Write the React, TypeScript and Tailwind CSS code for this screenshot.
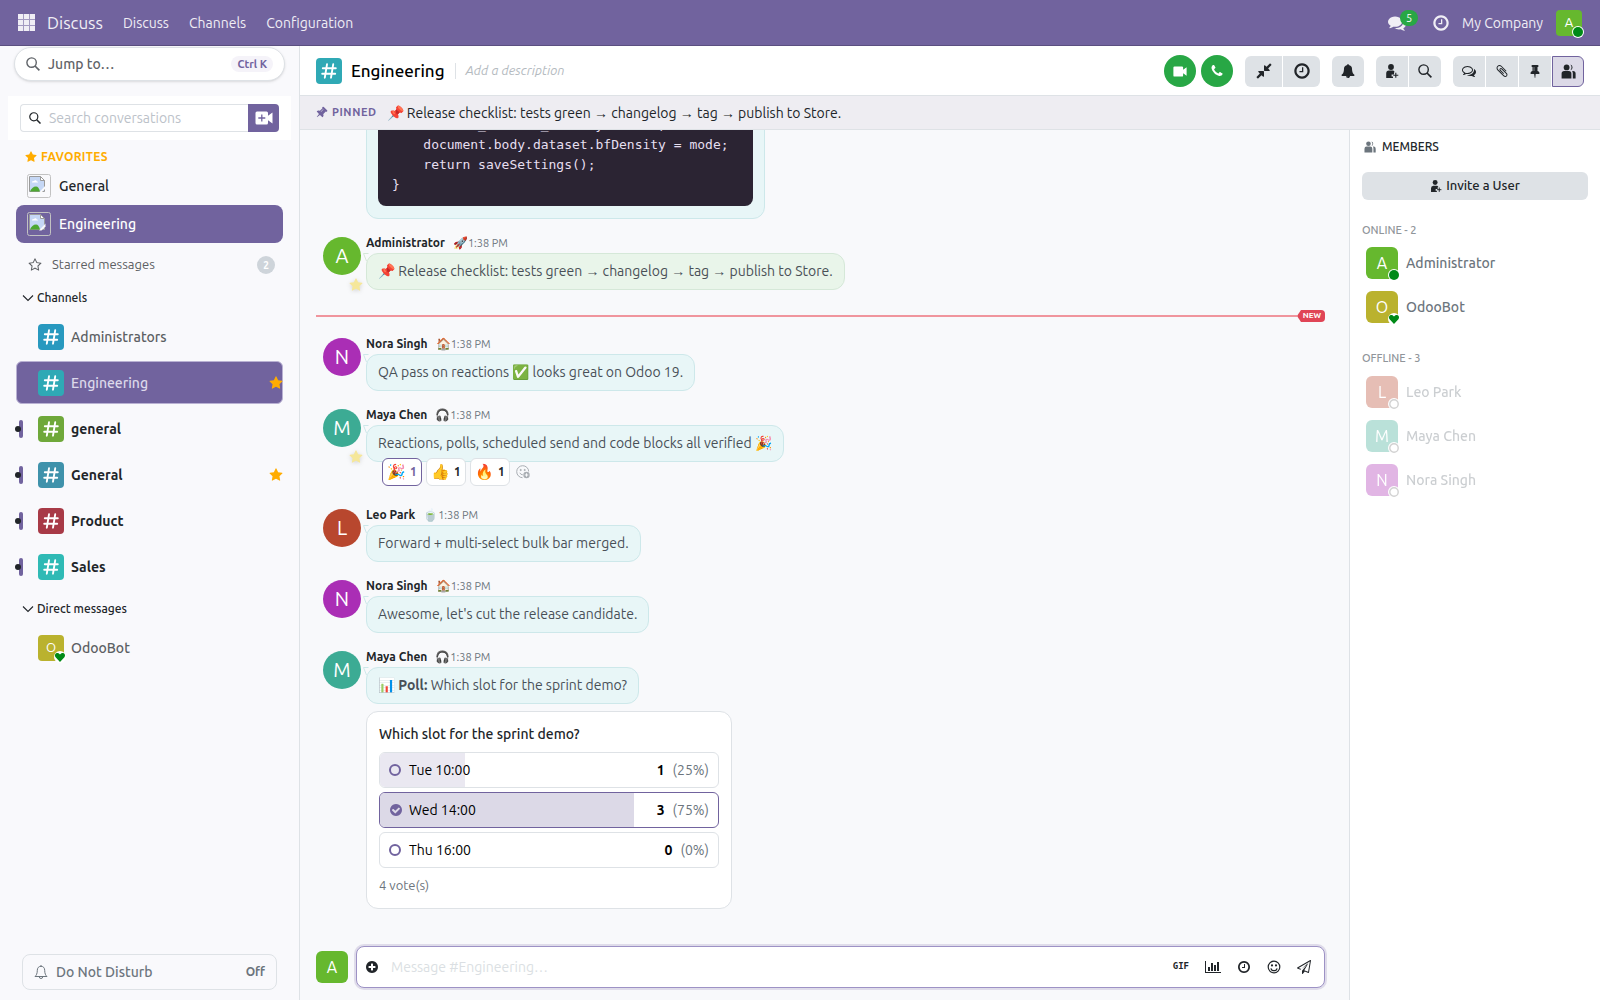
import type { ReactNode } from "react";
import clsx from "clsx";

// Font Awesome 4 glyphs
const icons = {
  clock:
    "M1024 544v448q0 14-9 23t-23 9h-320q-14 0-23-9t-9-23v-64q0-14 9-23t23-9h224v-352q0-14 9-23t23-9h64q14 0 23 9t9 23zm416 352q0-148-73-273t-198-198-273-73-273 73-198 198-73 273 73 273 198 198 273 73 273-73 198-198 73-273zm224 0q0 209-103 385.5t-279.5 279.5-385.5 103-385.5-103-279.5-279.5-103-385.5 103-385.5 279.5-279.5 385.5-103 385.5 103 279.5 279.5 103 385.5z",
  comments:
    "M1408 768q0 139-94 257t-256.5 186.5-353.5 68.5q-86 0-176-16-124 88-278 128-36 9-86 16h-3q-11 0-20.5-8t-11.5-21q-1-3-1-6.5t.5-6.5 2-6l2.5-5 3.5-5.5 4-5 4.5-5 4-4.5q5-6 23-25t26-29.5 22.5-29 25-38.5 20.5-44q-124-72-195-177t-71-224q0-139 94-257t256.5-186.5 353.5-68.5 353.5 68.5 256.5 186.5 94 257zm384 256q0 120-71 224.5t-195 176.5q10 24 20.5 44t25 38.5 22.5 29 26 29.5 23 25q1 1 4 4.5t4.5 5 4 5 3.5 5.5l2.5 5 2 6 .5 6.5-1 6.5q-3 14-13 22t-22 7q-50-7-86-16-154-40-278-128-90 16-176 16-271 0-472-132 58 4 88 4 161 0 309-45t264-129q125-92 192-212t67-254q0-77-23-152 129 71 204 178t75 230z",
  commentsO:
    "M704 384q-153 0-286 52t-211.5 141-78.5 191q0 82 53 158t149 132l97 56-35 84q34-20 62-39l44-31 53 10q78 14 153 14 153 0 286-52t211.5-141 78.5-191-78.5-191-211.5-141-286-52zm0-128q191 0 353.5 68.5t256.5 186.5 94 257-94 257-256.5 186.5-353.5 68.5q-86 0-176-16-124 88-278 128-36 9-86 16h-3q-11 0-20.5-8t-11.5-21q-1-3-1-6.5t.5-6.5 2-6l2.5-5 3.5-5.5 4-5 4.5-5 4-4.5q5-6 23-25t26-29.5 22.5-29 25-38.5 20.5-44q-124-72-195-177t-71-224q0-139 94-257t256.5-186.5 353.5-68.5zm822 1169q10 24 20.5 44t25 38.5 22.5 29 26 29.5 23 25q1 1 4 4.5t4.5 5 4 5 3.5 5.5l2.5 5 2 6 .5 6.5-1 6.5q-3 14-13 22t-22 7q-50-7-86-16-154-40-278-128-90 16-176 16-271 0-472-132 58 4 88 4 161 0 309-45t264-129q125-92 192-212t67-254q0-77-23-152 129 71 204 178t75 230q0 120-71 224.5t-195 176.5z",
  pin: "M800 864v-448q0-14-9-23t-23-9-23 9-9 23v448q0 14 9 23t23 9 23-9 9-23zm672 352q0 26-19 45t-45 19h-429l-51 483q-2 12-10.5 20.5t-20.5 8.5h-1q-27 0-32-27l-76-485h-404q-26 0-45-19t-19-45q0-123 78.5-221.5t177.5-98.5v-512q-52 0-90-38t-38-90 38-90 90-38h640q52 0 90 38t38 90-38 90-90 38v512q99 0 177.5 98.5t78.5 221.5z",
  star: "M1728 647q0 22-26 48l-363 354 86 500q1 7 1 20 0 21-10.5 35.5t-30.5 14.5q-19 0-40-12l-449-236-449 236q-22 12-40 12-21 0-31.5-14.5t-10.5-35.5q0-6 2-20l86-500-364-354q-25-27-25-48 0-37 56-46l502-73 225-455q19-41 49-41t49 41l225 455 502 73q56 9 56 46z",
  starO:
    "M1201 1004l306-297-422-62-189-382-189 382-422 62 306 297-73 421 378-199 377 199zm527-357q0 22-26 48l-363 354 86 500q1 7 1 20 0 50-41 50-19 0-40-12l-449-236-449 236q-22 12-40 12-21 0-31.5-14.5t-10.5-35.5q0-6 2-20l86-500-364-354q-25-27-25-48 0-37 56-46l502-73 225-455q19-41 49-41t49 41l225 455 502 73q56 9 56 46z",
  bell: "M912 1696q0-16-16-16-59 0-101.5-42.5t-42.5-101.5q0-16-16-16t-16 16q0 73 51.5 124.5t124.5 51.5q16 0 16-16zm816-288q0 52-38 90t-90 38h-448q0 106-75 181t-181 75-181-75-75-181h-448q-52 0-90-38t-38-90q50-42 91-88t85-119.5 74.5-158.5 50-206 19.5-260q0-152 117-282.5t307-158.5q-8-19-8-39 0-40 28-68t68-28 68 28 28 68q0 20-8 39 190 28 307 158.5t117 282.5q0 139 19.5 260t50 206 74.5 158.5 85 119.5 91 88z",
  phone:
    "M1600 1240q0 27-10 70.5t-21 68.5q-21 50-122 106-94 51-186 51-27 0-53-3.5t-57.5-12.5-47-14.5-55.5-20.5-49-18q-98-35-175-83-127-79-264-216t-216-264q-48-77-83-175-3-9-18-49t-20.5-55.5-14.5-47-12.5-57.5-3.5-53q0-92 51-186 56-101 106-122 25-11 68.5-21t70.5-10q14 0 21 3 18 6 53 76 11 19 30 54t35 63.5 31 53.5q3 4 17.5 25t21.5 35.5 7 28.5q0 20-28.5 50t-62 55-62 53-28.5 46q0 9 5 22.5t8.5 20.5 14 24 11.5 19q76 137 174 235t235 174q2 1 19 11.5t24 14 20.5 8.5 22.5 5q18 0 46-28.5t53-62 55-62 50-28.5q14 0 28.5 7t35.5 21.5 25 17.5q25 15 53.5 31t63.5 35 54 30q70 35 76 53 3 7 3 21z",
  plusCircle:
    "M1344 960v-128q0-26-19-45t-45-19h-256v-256q0-26-19-45t-45-19h-128q-26 0-45 19t-19 45v256h-256q-26 0-45 19t-19 45v128q0 26 19 45t45 19h256v256q0 26 19 45t45 19h128q26 0 45-19t19-45v-256h256q26 0 45-19t19-45zm320-64q0 209-103 385.5t-279.5 279.5-385.5 103-385.5-103-279.5-279.5-103-385.5 103-385.5 279.5-279.5 385.5-103 385.5 103 279.5 279.5 103 385.5z",
  paperclip:
    "M1596 1385q0 117-79 196t-196 79q-135 0-235-100l-777-776q-113-115-113-271 0-159 110-270t269-111q158 0 273 113l605 606q10 10 10 22 0 16-30.5 46.5t-46.5 30.5q-13 0-23-10l-606-607q-79-77-181-77-106 0-179 75t-73 181q0 105 76 181l776 777q63 63 145 63 64 0 106-42t42-106q0-82-63-145l-581-581q-26-24-60-24-29 0-48 19t-19 48q0 32 25 59l410 410q10 10 10 22 0 16-31 47t-47 31q-12 0-22-10l-410-410q-63-61-63-149 0-82 57-139t139-57q88 0 149 63l581 581q100 98 100 235z",
  compress:
    "M896 960v448q0 26-19 45t-45 19-45-19l-144-144-332 332q-10 10-23 10t-23-10l-114-114q-10-10-10-23t10-23l332-332-144-144q-19-19-19-45t19-45 45-19h448q26 0 45 19t19 45zm755-672q0 13-10 23l-332 332 144 144q19 19 19 45t-19 45-45 19h-448q-26 0-45-19t-19-45v-448q0-26 19-45t45-19 45 19l144 144 332-332q10-10 23-10t23 10l114 114q10 10 10 23z",
  send: "M1764 11q33 24 27 64l-256 1536q-5 29-32 45-14 8-31 8-11 0-24-5l-453-185-242 295q-18 23-49 23-13 0-22-4-19-7-30.5-23.5t-11.5-36.5v-349l864-1059-1069 925-395-162q-37-14-40-55-2-40 32-59l1664-960q15-9 32-9 20 0 36 11zm-342 1499l221-1323-1434 827 336 137 863-639-478 797z",
  checkCircle:
    "M1412 734q0-28-18-46l-91-90q-19-19-45-19t-45 19l-408 407-226-226q-19-19-45-19t-45 19l-91 90q-18 18-18 46 0 27 18 45l362 362q19 19 45 19 27 0 46-19l543-543q18-18 18-45zm252 162q0 209-103 385.5t-279.5 279.5-385.5 103-385.5-103-279.5-279.5-103-385.5 103-385.5 279.5-279.5 385.5-103 385.5 103 279.5 279.5 103 385.5z",
};

type IconProps = { name: keyof typeof icons; className?: string };

const Icon = ({ name, className }: IconProps) => (
  <svg viewBox="0 0 1792 1792" fill="currentColor" aria-hidden="true" className={clsx("shrink-0", className)}>
    <path d={icons[name]} />
  </svg>
);

const SearchIcon = ({ className }: { className?: string }) => (
  <svg viewBox="0 0 14 14" fill="none" stroke="currentColor" strokeWidth="1.4" className={clsx("shrink-0", className)}>
    <circle cx="5.6" cy="5.6" r="4.7" />
    <path d="M9 9l4.4 4.4" strokeWidth="1.7" />
  </svg>
);

const UserPlusIcon = ({ className }: { className?: string }) => (
  <svg viewBox="0 0 14 14" fill="currentColor" className={clsx("shrink-0", className)}>
    <circle cx="6" cy="3" r="2.9" />
    <path d="M1.2 14V9.6A3 3 0 0 1 4 6.6h3.4c1.2 0 2 .6 2.3 1.6H9v2.2H6.6v2H8V14z" />
    <path d="M10.8 8.8v5M8.3 11.3h5" stroke="currentColor" strokeWidth="1.1" />
  </svg>
);

const UsersIcon = ({ className }: { className?: string }) => (
  <svg viewBox="0 0 15 15" fill="currentColor" className={clsx("shrink-0", className)}>
    <circle cx="5.6" cy="3.4" r="2.9" />
    <path d="M9.4.6a2.9 2.9 0 0 1 0 5.6 4.4 4.4 0 0 0 0-5.6z" />
    <path d="M.6 14.5V9.6A2.6 2.6 0 0 1 3.2 7h4.6a2.6 2.6 0 0 1 2.6 2.6v4.9z" />
    <path d="M11.2 7h.8a2.6 2.6 0 0 1 2.6 2.6v4.9h-2.8V9.6c0-1-.2-1.9-.6-2.6z" />
  </svg>
);

const VideoIcon = ({ plus, className }: { plus?: boolean; className?: string }) => (
  <svg viewBox="0 0 18 14" className={clsx("shrink-0", className)}>
    <path fill="currentColor" d="M2 .5h9.5A1.5 1.5 0 0 1 13 2v2.8L17.5 1.5v11L13 9.2V12a1.5 1.5 0 0 1-1.5 1.5H2A1.5 1.5 0 0 1 .5 12V2A1.5 1.5 0 0 1 2 .5z" />
    {plus && <path d="M6.8 3.5v7M3.3 7h7" stroke="#71639e" strokeWidth="1.3" />}
  </svg>
);

const ChevronDown = () => (
  <svg viewBox="0 0 12 8" fill="none" stroke="#212529" strokeWidth="1.1" className="h-2 w-3">
    <path d="M1 1.5l5 5 5-5" />
  </svg>
);

const BellOutline = () => (
  <svg viewBox="0 0 14 16" fill="none" stroke="currentColor" strokeWidth="1" className="h-4 w-3.5 shrink-0">
    <path d="M7 1v1.5M7 2.3c-2.4 0-3.7 1.7-3.7 4 0 3.5-1 5-2.3 6.2h12c-1.3-1.2-2.3-2.7-2.3-6.2 0-2.3-1.3-4-3.7-4zM5.3 12.8a1.7 1.7 0 0 0 3.4 0" />
  </svg>
);

const SmileIcon = ({ className }: { className?: string }) => (
  <svg viewBox="0 0 14 14" fill="none" stroke="currentColor" strokeWidth="1.2" className={clsx("shrink-0", className)}>
    <circle cx="7" cy="7" r="5.8" />
    <circle cx="5" cy="5.4" r=".5" fill="currentColor" />
    <circle cx="9" cy="5.4" r=".5" fill="currentColor" />
    <path d="M3.9 8.3a3.2 3.2 0 0 0 6.2 0" />
  </svg>
);

const ReactIcon = () => (
  <svg viewBox="0 0 14 14" fill="none" stroke="currentColor" strokeWidth="1" className="size-3.5">
    <path d="M12.7 6.5A6 6 0 1 0 6.5 12.7" />
    <circle cx="4.7" cy="5" r=".6" fill="currentColor" />
    <circle cx="8.7" cy="5" r=".6" fill="currentColor" />
    <path d="M3.8 7.8a3.2 3.2 0 0 0 3 2" />
    <circle cx="10.5" cy="10" r="3.2" fill="currentColor" stroke="none" />
    <path d="M10.5 8.3v3.4M8.8 10h3.4" stroke="#f8f9fb" />
  </svg>
);

const BrokenImage = () => (
  <svg viewBox="0 0 24 24" className="size-6 shrink-0">
    <rect x=".5" y=".5" width="23" height="23" rx="2" fill="none" stroke="#c2c2c2" />
    <path d="M2.5 2.5h11l4 4v11h-15z" fill="#c5d7f5" stroke="#9a9a9a" />
    <path d="M13.5 2.5v4h4z" fill="#fff" stroke="#9a9a9a" />
    <path d="M5 8.5c0-1 1-1.6 1.9-1.3.6-1.3 2.6-1.1 2.9.3.9 0 1.2.5 1.2 1z" fill="#fff" />
    <path d="M3 17.500c1-3 3.500-5 6-5 2 0 3 1.500 4 5z" fill="#4ea832" />
    <path d="M18.500 11.500L12 18.500h2.500l4-4z" fill="#f9f9fb" />
  </svg>
);

const HashIcon = ({ color }: { color: string }) => (
  <span className={clsx("flex size-[26px] shrink-0 items-center justify-center rounded", color)}>
    <svg viewBox="0 0 16 16" stroke="#fff" strokeWidth="1.9" strokeLinecap="round" className="size-4">
      <path d="M6 1.3L3.8 14.7M12.2 1.3L10 14.7M1.8 5.2h13M1.2 10.8h13" />
    </svg>
  </span>
);

const Presence = ({ kind }: { kind: "online" | "bot" | "offline" }) => (
  <svg viewBox="0 0 12 12" className="absolute -right-0.5 -bottom-0.5 size-3">
    <circle cx="6" cy="6" r="6" fill="#fff" />
    {kind === "online" && <circle cx="6" cy="6" r="5" fill="#008a17" />}
    {kind === "bot" && (
      <path d="M6 11L1.6 6.2C.2 4.300 1.300 2 3.300 2c1.200 0 2 .6 2.700 1.500C6.700 2.600 7.500 2 8.700 2c2 0 3.100 2.300 1.700 4.200z" fill="#008a17" />
    )}
    {kind === "offline" && <circle cx="6" cy="6" r="4.200" fill="none" stroke="#808080" strokeWidth="1.400" />}
  </svg>
);

const channels = [
  { name: "Administrators", color: "bg-[#2899bf]" },
  { name: "Engineering", color: "bg-[#2fa9b5]", active: true, starred: true },
  { name: "general", color: "bg-[#6fa83a]", unread: true },
  { name: "General", color: "bg-[#3f92ab]", unread: true, starred: true },
  { name: "Product", color: "bg-[#a83a47]", unread: true },
  { name: "Sales", color: "bg-[#2fbab5]", unread: true },
];

const Navbar = () => (
  <header className="flex h-[46px] shrink-0 items-center border-b border-[#5b4f80] bg-[#71639e] px-[18px] text-[#f0eef5]">
    <button aria-label="Apps" className="mr-3">
      <svg viewBox="0 0 17 17" fill="currentColor" className="size-[17px]">
        <rect width="17" height="17" opacity=".4" />
        {[0, 6, 12].map((y) => [0, 6, 12].map((x) => <rect key={`${x}-${y}`} x={x} y={y} width="5" height="5" />))}
      </svg>
    </button>
    <a href="#" className="text-[17px]">Discuss</a>
    <nav className="ml-5 flex gap-5 text-sm">
      <a href="#">Discuss</a>
      <a href="#">Channels</a>
      <a href="#">Configuration</a>
    </nav>
    <div className="ml-auto flex items-center text-sm">
      <button aria-label="Conversations" className="relative mr-[26px]">
        <Icon name="comments" className="size-[18px]" />
        <span className="absolute -top-1 left-3 rounded-full bg-[#28a745] px-1.5 text-[11px] leading-4 text-white">5</span>
      </button>
      <button aria-label="Activities" className="mr-3">
        <Icon name="clock" className="size-[18px]" />
      </button>
      <button>My Company</button>
      <button aria-label="Administrator" className="relative ml-[13px] flex size-[26px] items-center justify-center rounded bg-[#66b82e] text-[13px] text-white">
        A
        <Presence kind="online" />
      </button>
    </div>
  </header>
);

const ChannelRow = ({ name, color, active, unread, starred }: (typeof channels)[number]) => (
  <a
    href="#"
    className={clsx(
      "relative mb-[3px] ml-4 mr-4 flex h-[43px] items-center gap-[7px] rounded-md border pl-[21px] text-sm",
      active ? "border-[#b9b1d3] bg-[#71639e] font-medium text-[#dcd8ea]" : "border-transparent",
      unread ? "font-bold text-[#212529]" : !active && "font-medium text-[#5c5f63]",
    )}
  >
    {unread && (
      <span className="absolute top-1/2 left-0.5 h-[18px] w-1 -translate-y-1/2 rounded-sm bg-[#71639e]">
        <span className="absolute top-1.5 -left-1 size-1.5 rounded-full bg-[#212529]" />
      </span>
    )}
    <HashIcon color={color} />
    <span>{name}</span>
    {starred && <Icon name="star" className="-mr-px ml-auto size-3.5 text-[#ffac00]" />}
  </a>
);

const Sidebar = () => (
  <aside className="flex w-[300px] shrink-0 flex-col border-r border-[#dee2e6] bg-[#f9f9fc]">
    <button className="mx-3.5 mt-px flex h-[34px] shrink-0 items-center gap-2 rounded-full border border-[#dee2e6] bg-white px-[11px] text-[#5f6368] shadow-sm">
      <SearchIcon className="size-3.5" />
      <span className="text-sm font-medium">Jump to…</span>
      <kbd className="ml-auto rounded-full bg-[#f5f3f9] px-1.5 font-['Ubuntu','Liberation_Sans',sans-serif] text-[11px] leading-4 font-semibold text-[#71639e]">Ctrl K</kbd>
    </button>
    <div className="mx-2 mt-[15px] flex bg-white px-3 py-2">
      <label className="flex h-7 grow items-center gap-2 rounded-l border border-r-0 border-[#dee2e6] px-2">
        <SearchIcon className="size-3 text-[#212529]" />
        <input placeholder="Search conversations" aria-label="Search conversations" className="w-full text-sm outline-none placeholder:text-[#bcc2c9]" />
      </label>
      <button aria-label="New meeting" className="flex w-[31px] items-center justify-center rounded-r bg-[#71639e] text-white">
        <VideoIcon plus className="h-3.5 w-[18px]" />
      </button>
    </div>
    <h3 className="mt-2 flex h-4 items-center gap-1 px-[25px] pt-0.5 text-xs font-bold tracking-wide text-[#ffac00]">
      <Icon name="star" className="size-3" />
      FAVORITES
    </h3>
    <a href="#" className="mx-4 mt-[3px] flex h-[38px] items-center gap-2 px-[11px] text-sm font-medium text-[#212529]">
      <BrokenImage />
      General
    </a>
    <a href="#" className="mx-4 flex h-[38px] items-center gap-2 rounded-lg bg-[#71639e] px-[11px] text-sm font-medium text-white">
      <BrokenImage />
      Engineering
    </a>
    <button className="mx-4 mt-1 flex h-9 items-center gap-2.5 pr-2 pl-3 text-[13px] text-[#5c5f63]">
      <Icon name="starO" className="size-3.5" />
      Starred messages
      <span className="ml-auto flex size-[18px] items-center justify-center rounded-full bg-[#ced4da] text-[10px] font-bold text-white">2</span>
    </button>
    <button className="mt-[3px] flex h-6 items-center gap-[3px] px-[22px] text-xs font-medium text-[#212529]">
      <ChevronDown />
      Channels
    </button>
    <nav className="mt-[5px]">
      {channels.map((c) => (
        <ChannelRow key={c.name} {...c} />
      ))}
    </nav>
    <button className="mt-1.5 flex h-6 items-center gap-[3px] px-[22px] text-xs font-medium text-[#212529]">
      <ChevronDown />
      Direct messages
    </button>
    <a href="#" className="mt-[5px] flex h-[43px] items-center gap-[7px] pl-[38px] text-sm font-medium text-[#5c5f63]">
      <span className="relative flex size-[26px] items-center justify-center rounded bg-[#bab22e] text-[13px] font-normal text-white">
        O
        <Presence kind="bot" />
      </span>
      OdooBot
    </a>
    <button className="mx-[22px] mt-auto mb-2.5 flex h-9 shrink-0 items-center gap-2 rounded-lg border border-[#dee2e6] px-[11px] text-[#6c757d]">
      <BellOutline />
      <span className="text-sm font-medium">Do Not Disturb</span>
      <span className="ml-auto text-xs font-semibold">Off</span>
    </button>
  </aside>
);

const ToolButton = ({ label, wide, active, children }: { label: string; wide?: boolean; active?: boolean; children: ReactNode }) => (
  <button
    aria-label={label}
    className={clsx(
      "flex h-[31px] items-center justify-center text-[#212529] first:rounded-l-md last:rounded-r-md",
      wide ? "w-[37px]" : "w-8",
      active ? "border border-[#71639e] bg-[#dcd9e7]" : "bg-[#dee2e6]",
    )}
  >
    {children}
  </button>
);

const ChannelHeader = () => (
  <div className="flex h-[50px] shrink-0 items-center border-b border-[#dee2e6] bg-white px-4 pt-px">
    <HashIcon color="bg-[#2fa9b5]" />
    <h1 className="ml-[9px] text-[17px] font-medium text-black">Engineering</h1>
    <span className="mx-2.5 h-4 w-px bg-[#dee2e6]" />
    <span className="text-[13px] text-[#b4bac0] italic">Add a description</span>
    <div className="ml-auto flex items-center gap-3">
      <div className="flex gap-[5px]">
        <button aria-label="Video call" className="flex size-8 items-center justify-center rounded-full bg-[#28a745] text-white">
          <VideoIcon className="h-[11px] w-3.5" />
        </button>
        <button aria-label="Call" className="flex size-8 items-center justify-center rounded-full bg-[#28a745] text-white">
          <Icon name="phone" className="size-3.5" />
        </button>
      </div>
      <div className="flex gap-px">
        <ToolButton label="Compact" wide><Icon name="compress" className="size-[18px]" /></ToolButton>
        <ToolButton label="Scheduled" wide><Icon name="clock" className="size-[18px]" /></ToolButton>
      </div>
      <div className="flex">
        <ToolButton label="Notifications"><Icon name="bell" className="size-3.5" /></ToolButton>
      </div>
      <div className="flex gap-px">
        <ToolButton label="Invite"><UserPlusIcon className="size-3.5" /></ToolButton>
        <ToolButton label="Search"><SearchIcon className="size-3.5" /></ToolButton>
      </div>
      <div className="flex gap-px">
        <ToolButton label="Threads"><Icon name="commentsO" className="size-3.5" /></ToolButton>
        <ToolButton label="Attachments"><Icon name="paperclip" className="size-3.5" /></ToolButton>
        <ToolButton label="Pinned"><Icon name="pin" className="size-3.5" /></ToolButton>
        <ToolButton label="Members" active><UsersIcon className="size-[15px]" /></ToolButton>
      </div>
    </div>
  </div>
);

type MessageProps = {
  author: string;
  color: string;
  status: string;
  self?: boolean;
  starred?: boolean;
  text: ReactNode;
  children?: ReactNode;
};

const Message = ({ author, color, status, self, starred, text, children }: MessageProps) => (
  <article className="flex shrink-0 gap-[5px] pb-3.5 pl-[7px]">
    <div className="relative mt-1 shrink-0">
      <span className={clsx("flex size-[38px] items-center justify-center rounded-full text-xl text-white", color)}>{author[0]}</span>
      {starred && <Icon name="star" className="absolute top-[41px] left-[26px] size-3.5 text-[#f5e79a] drop-shadow-sm" />}
    </div>
    <div>
      <div className="flex h-5 items-center text-xs">
        <strong className="text-[#212529]">{author}</strong>
        <span className="ml-2">{status}</span>
        <time className="text-[11px] text-[#6c757d]">1:38 PM</time>
      </div>
      <div
        className={clsx(
          "relative w-fit rounded-xl border px-[11px] py-2 text-sm leading-[19px] text-[#495057]",
          self ? "border-[#d5e8d8] bg-[#e9f5ea]" : "border-[#cde8ea] bg-[#e8f6f7]",
        )}
      >
        <svg viewBox="0 0 6 9" className={clsx("absolute -top-px -left-1 h-[9px] w-1.5", self ? "text-[#d5e8d8]" : "text-[#cde8ea]")}>
          <path d="M.5.5H5.5M.5.5L3.5 8" fill="none" stroke="currentColor" />
        </svg>
        {text}
      </div>
      {children}
    </div>
  </article>
);

const reactions = [
  { emoji: "🎉", mine: true },
  { emoji: "👍" },
  { emoji: "🔥" },
];

const pollOptions = [
  { label: "Tue 10:00", votes: 1, percent: 25 },
  { label: "Wed 14:00", votes: 3, percent: 75, selected: true },
  { label: "Thu 16:00", votes: 0, percent: 0 },
];

const Poll = () => (
  <div className="mt-[7px] w-[366px] rounded-xl border border-[#dee2e6] bg-white px-3 pt-3 pb-3.5">
    <h4 className="text-sm font-medium text-[#212529]">Which slot for the sprint demo?</h4>
    <div className="mt-2 flex flex-col gap-1">
      {pollOptions.map(({ label, votes, percent, selected }) => (
        <button
          key={label}
          className={clsx(
            "relative flex h-9 items-center overflow-hidden rounded-md border px-[9px] text-sm text-black",
            selected ? "border-[#71639e]" : "border-[#dee2e6]",
          )}
        >
          <span className={clsx("absolute inset-y-0 left-0", selected ? "bg-[#dcd9e7]" : "bg-[#eae8f1]")} style={{ width: `${percent}%` }} />
          <span className="relative flex w-full items-center">
            {selected ? (
              <Icon name="checkCircle" className="size-3.5 text-[#71639e]" />
            ) : (
              <span className="size-3 rounded-full border-2 border-[#71639e]" />
            )}
            <span className={selected ? "ml-1.5" : "ml-2"}>{label}</span>
            <strong className="mr-2 ml-auto">{votes}</strong>
            <span className="text-[#6c757d]">({percent}%)</span>
          </span>
        </button>
      ))}
    </div>
    <p className="mt-2 text-[13px] leading-[18px] text-[#6c757d]">4 vote(s)</p>
  </div>
);

const Thread = () => (
  <section className="flex min-h-0 flex-1 flex-col justify-end overflow-hidden px-4 pr-6 pb-[23px] *:shrink-0">
    <div className="mb-3.5 ml-[50px] w-[399px] rounded-xl border border-[#cde8ea] bg-[#e8f6f7] p-[11px] pb-3">
      <pre className="rounded-lg bg-[#2b2433] px-3.5 py-[11px] font-['DejaVu_Sans_Mono',monospace] text-[13px] leading-5 text-[#e6dff0]">
{`    session_channel_density = mode;
    document.body.dataset.bfDensity = mode;
    return saveSettings();
}`}
      </pre>
    </div>
    <Message author="Administrator" color="bg-[#66b82e]" status="🚀" self starred text="📌 Release checklist: tests green → changelog → tag → publish to Store." />
    <div className="mt-1.5 mb-3 flex h-3 items-center">
      <span className="h-0.5 grow bg-[#f0959d]" />
      <svg viewBox="0 0 4 12" className="h-3 w-1"><path d="M4 0L0 6l4 6z" fill="#e04556" /></svg>
      <span className="rounded-r bg-[#e04556] pr-1 pl-0.5 text-[8px] leading-3 font-bold text-white">NEW</span>
    </div>
    <Message author="Nora Singh" color="bg-[#aa2eb5]" status="🏠" text="QA pass on reactions ✅ looks great on Odoo 19." />
    <Message author="Maya Chen" color="bg-[#3cab94]" status="🎧" starred text="Reactions, polls, scheduled send and code blocks all verified 🎉">
      <div className="relative -mt-1 mb-[5px] ml-4 flex items-center gap-1">
        {reactions.map(({ emoji, mine }) => (
          <button
            key={emoji}
            className={clsx(
              "flex h-7 w-10 items-center justify-center gap-1 rounded-md border bg-white text-xs font-semibold",
              mine ? "border-[#71639e] text-[#71639e]" : "border-[#dee2e6] text-[#212529]",
            )}
          >
            <span className="text-[15px]">{emoji}</span>
            <span>1</span>
          </button>
        ))}
        <button aria-label="Add a reaction" className="ml-0.5 text-[#a9aeb3]">
          <ReactIcon />
        </button>
      </div>
    </Message>
    <Message author="Leo Park" color="bg-[#b8472e]" status="🍵" text="Forward + multi-select bulk bar merged." />
    <Message author="Nora Singh" color="bg-[#aa2eb5]" status="🏠" text="Awesome, let's cut the release candidate." />
    <Message author="Maya Chen" color="bg-[#3cab94]" status="🎧" text={<>📊 <strong>Poll:</strong> Which slot for the sprint demo?</>}>
      <Poll />
    </Message>
  </section>
);

const Composer = () => (
  <form className="flex shrink-0 items-center gap-2 pr-6 pb-3 pl-4">
    <span className="flex size-8 items-center justify-center rounded-md bg-[#66b82e] text-base text-white">A</span>
    <div className="flex h-[42px] flex-1 items-center rounded-lg border border-[#9d92c5] bg-white pr-[13px] pl-2 text-[#212529] ring-2 ring-[#dfdcea]">
      <button type="button" aria-label="More actions"><Icon name="plusCircle" className="size-3.5" /></button>
      <input placeholder="Message #Engineering…" aria-label="Message #Engineering" className="ml-3 min-w-0 flex-1 text-sm outline-none placeholder:text-[#dbdfe3]" />
      <div className="flex items-center gap-4">
        <button type="button" className="font-['DejaVu_Sans_Mono',monospace] text-[9px] font-bold">GIF</button>
        <button type="button" aria-label="Create poll">
          <svg viewBox="0 0 2048 1792" fill="currentColor" className="h-3.5 w-4">
            <path d="M640 896v512h-256v-512h256zm384-512v1024h-256v-1024h256zm1024 1152v128h-2048v-1536h128v1408h1920zm-640-896v768h-256v-768h256zm384-384v1152h-256v-1152h256z" />
          </svg>
        </button>
        <button type="button" aria-label="Schedule"><Icon name="clock" className="size-3.5" /></button>
        <button type="button" aria-label="Emoji"><SmileIcon className="size-3.5" /></button>
        <button type="button" aria-label="Send"><Icon name="send" className="size-3.5" /></button>
      </div>
    </div>
  </form>
);

const Member = ({ name, color, presence }: { name: string; color: string; presence: "online" | "bot" | "offline" }) => (
  <li className={clsx("flex h-11 items-center gap-2 pl-1 text-sm font-medium text-[#6c757d]", presence === "offline" && "opacity-35")}>
    <span className={clsx("relative flex size-8 items-center justify-center rounded-md text-base font-normal text-white", color)}>
      {name[0]}
      <Presence kind={presence} />
    </span>
    {name}
  </li>
);

const Members = () => (
  <aside className="w-[251px] shrink-0 border-l border-[#dee2e6] bg-white px-3">
    <h2 className="mt-2 flex h-[18px] items-center gap-1.5 pl-0.5 text-xs font-medium text-[#212529]">
      <UsersIcon className="size-3 text-[#6c757d]" />
      MEMBERS
    </h2>
    <button className="mt-4 flex h-7 w-full items-center justify-center gap-1 rounded-md bg-[#dee2e6] text-[13px] font-medium text-[#212529]">
      <UserPlusIcon className="size-3" />
      Invite a User
    </button>
    <h3 className="mt-[22px] text-[11px] leading-4 font-medium text-[#90959a]">ONLINE - 2</h3>
    <ul className="mt-[3px]">
      <Member name="Administrator" color="bg-[#66b82e]" presence="online" />
      <Member name="OdooBot" color="bg-[#bab22e]" presence="bot" />
    </ul>
    <h3 className="mt-[21px] text-[11px] leading-4 font-medium text-[#90959a]">OFFLINE - 3</h3>
    <ul className="mt-1">
      <Member name="Leo Park" color="bg-[#b8472e]" presence="offline" />
      <Member name="Maya Chen" color="bg-[#3cab94]" presence="offline" />
      <Member name="Nora Singh" color="bg-[#aa2eb5]" presence="offline" />
    </ul>
  </aside>
);

const App = () => {
  return (
    <div className="flex h-screen flex-col overflow-hidden bg-[#f8f9fb] font-['Ubuntu','Liberation_Sans',sans-serif]">
      <Navbar />
      <div className="flex min-h-0 flex-1">
        <Sidebar />
        <main className="flex min-w-0 flex-1 flex-col">
          <ChannelHeader />
          <div className="flex h-[34px] shrink-0 items-center border-b border-[#dee2e6] bg-[#eeedf2] px-[15px] text-sm text-[#212529]">
            <Icon name="pin" className="size-[13px] rotate-45 text-[#71639e]" />
            <span className="ml-1 text-[11px] font-bold tracking-wider text-[#71639e]">PINNED</span>
            <span className="ml-2.5">📌 Release checklist: tests green → changelog → tag → publish to Store.</span>
          </div>
          <div className="flex min-h-0 flex-1">
            <div className="flex min-w-0 flex-1 flex-col">
              <Thread />
              <Composer />
            </div>
            <Members />
          </div>
        </main>
      </div>
    </div>
  );
};

export default App;
